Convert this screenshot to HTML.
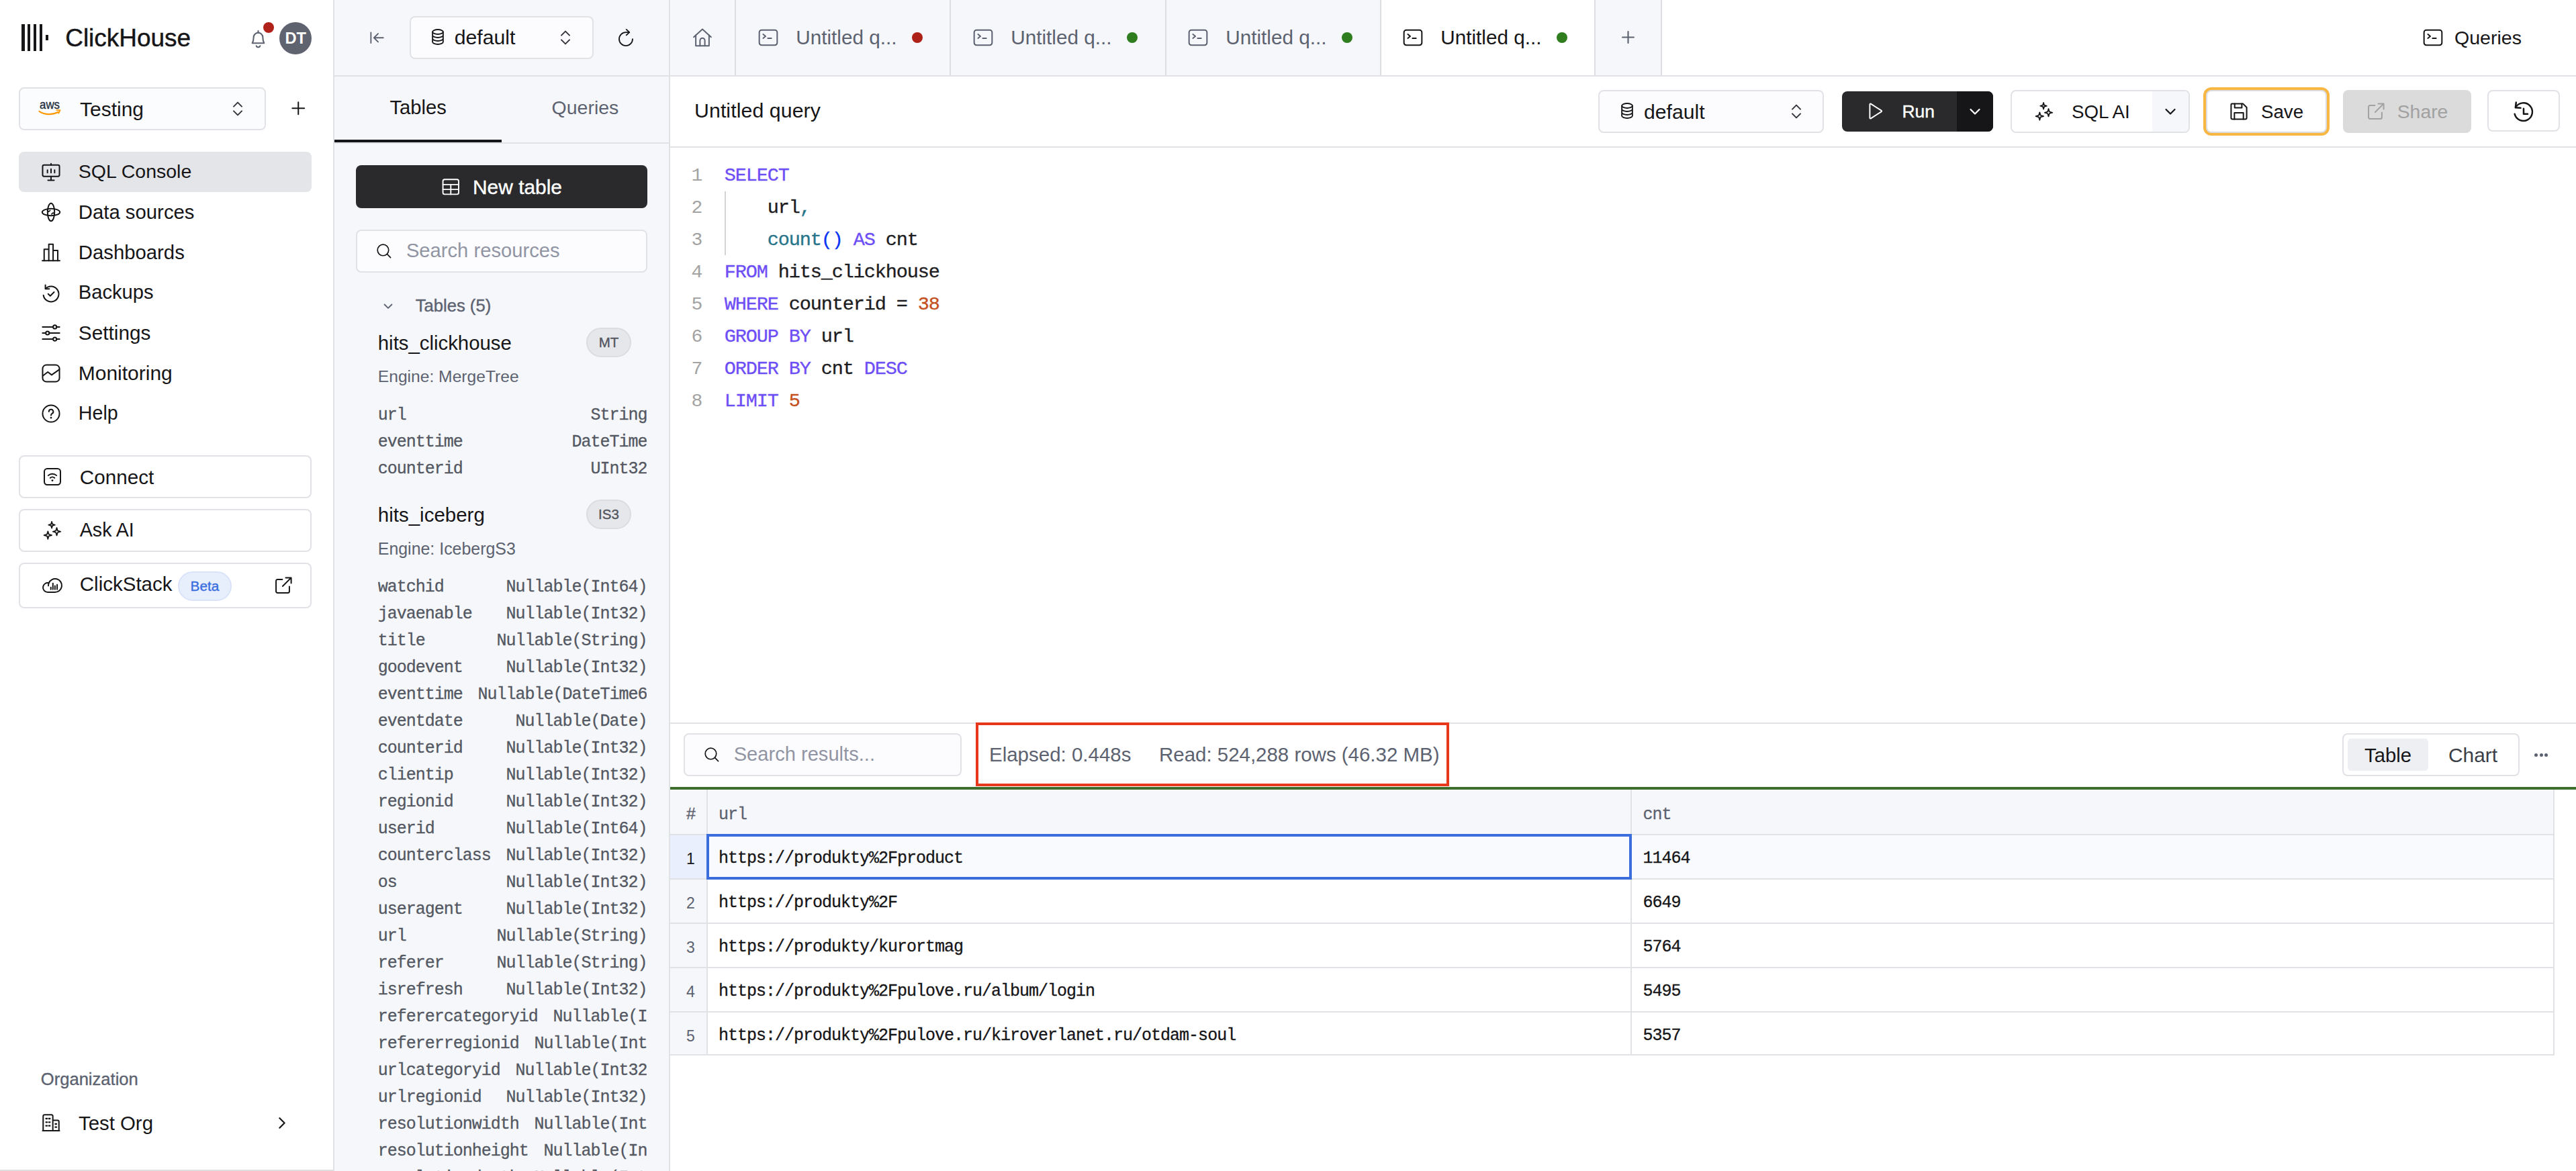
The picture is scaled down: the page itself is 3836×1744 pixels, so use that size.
<!DOCTYPE html>
<html lang="en"><head><meta charset="utf-8"><title>ClickHouse Cloud - SQL Console</title>
<style>
html,body{margin:0;padding:0;background:#fff}
body{width:3836px;height:1744px;position:relative;overflow:hidden;font-family:'Liberation Sans', sans-serif;}
.a{position:absolute;display:block}
.t{white-space:pre}
.row{-webkit-text-stroke:0.3px;left:562.800px;width:400.700px;height:40px;line-height:40px;display:flex;justify-content:space-between;gap:22px;overflow:hidden;white-space:pre;font-family:'Liberation Mono', monospace;font-size:25px;letter-spacing:-1.0px;color:#535862}
.row span{flex:none}
.cell{font-family:'Liberation Mono', monospace;font-size:25px;letter-spacing:-1.0px;line-height:40px;white-space:pre;color:#161517;-webkit-text-stroke:0.3px}
.ln{font-family:'Liberation Mono', monospace;font-size:28px;line-height:48px;width:32px;text-align:center;color:#a3a3a3}
.code{font-family:'Liberation Mono', monospace;font-size:28.500px;letter-spacing:-1.100px;line-height:48px;white-space:pre;color:#1d1d1f;-webkit-text-stroke:0.35px}
.ck{color:#6e4ff5}.cf{color:#287489}.cb{color:#0a34f5}.cn{color:#c5501f}.cp{color:#1d1d1f}
</style></head>
<body>
<div class="a" style="left:0px;top:0px;width:496px;height:1744px;background:#fff;"></div>
<div class="a" style="left:496px;top:0px;width:2px;height:1744px;background:#e1e2e6;"></div>
<div class="a" style="left:0px;top:1742px;width:496px;height:2px;background:#dedede;"></div>
<div class="a" style="left:498px;top:0px;width:498px;height:1744px;background:#f6f7fa;"></div>
<div class="a" style="left:996px;top:0px;width:2px;height:1744px;background:#e1e2e6;"></div>
<div class="a" style="left:32px;top:36px;width:4.5px;height:39.7px;background:#161517;"></div>
<div class="a" style="left:40.9px;top:36px;width:4.5px;height:39.7px;background:#161517;"></div>
<div class="a" style="left:49.8px;top:36px;width:4.5px;height:39.7px;background:#161517;"></div>
<div class="a" style="left:58.75px;top:36px;width:4.5px;height:39.7px;background:#161517;"></div>
<div class="a" style="left:67.9px;top:51.8px;width:4.3px;height:8.4px;background:#161517;"></div>
<span class="a t" id="t1" style="top:31.8px;line-height:50px;font-size:36.98px;color:#161517;-webkit-text-stroke:0.45px #161517;left:97.2px;letter-spacing:0.003px;">ClickHouse</span>
<svg class="a" style="left:368.9px;top:41.5px;color:#5c6270;" width="31" height="31" viewBox="0 0 24 24" fill="none" stroke="currentColor" stroke-width="1.6" stroke-linecap="round" stroke-linejoin="round"><path d="M5.2 17.2c.9-1.5 1.5-3.5 1.5-6.7a5.3 5.3 0 0 1 10.6 0c0 3.200.6 5.200 1.500 6.700H5.2z"/><path d="M9.8 20.300a2.3 2.300 0 0 0 4.400 0"/><path d="M12 3.200v2"/></svg>
<div class="a" style="left:391.8px;top:32.9px;width:16px;height:16px;border-radius:50%;background:#b0221a"></div>
<div class="a" style="left:416px;top:33px;width:48px;height:48px;border-radius:50%;background:#5f6370"></div>
<span class="a t" id="t2" style="top:41.2px;line-height:32px;font-size:23.62px;color:#fff;font-weight:700;left:424.5px;letter-spacing:0.008px;">DT</span>
<div class="a" style="left:28px;top:130px;width:368px;height:64px;background:#fbfcfe;border:2px solid #e1e2e6;border-radius:8px;box-sizing:border-box;"></div>
<svg class="a" style="left:56px;top:148px" width="38" height="28" viewBox="0 0 38 28"><text x="3" y="13.500" font-family="Liberation Sans, sans-serif" font-size="18.500" font-weight="400" fill="#252f3e" stroke="#252f3e" stroke-width="0.35" textLength="30" lengthAdjust="spacingAndGlyphs">aws</text><path d="M2.500 17.800c8.500 5.600 20 5.600 28.500 1" fill="none" stroke="#f90" stroke-width="2.200" stroke-linecap="round"/><path d="M28.300 15.800l5.200.3-2.100 4.600" fill="none" stroke="#f90" stroke-width="1.800" stroke-linecap="round" stroke-linejoin="round"/></svg>
<span class="a t" id="t3" style="top:141.5px;line-height:41px;font-size:29.98px;color:#161517;left:119px;letter-spacing:0.004px;">Testing</span>
<svg class="a" style="left:337.9px;top:146.0px;color:#33353b;" width="32" height="32" viewBox="0 0 24 24" fill="none" stroke="currentColor" stroke-width="1.5" stroke-linecap="round" stroke-linejoin="round"><path d="M7.500 9.500L12 5l4.500 4.500M7.500 14.500L12 19l4.500-4.500"/></svg>
<svg class="a" style="left:429.8px;top:147.4px;color:#161517;" width="28.5" height="28.5" viewBox="0 0 24 24" fill="none" stroke="currentColor" stroke-width="1.7" stroke-linecap="round" stroke-linejoin="round"><path d="M12 4.500v15M4.500 12h15"/></svg>
<div class="a" style="left:28px;top:226px;width:436px;height:60px;background:#e4e5e8;border-radius:8px;"></div>
<svg class="a" style="left:60.0px;top:239.7px;color:#161517;" width="32" height="32" viewBox="0 0 24 24" fill="none" stroke="currentColor" stroke-width="1.5" stroke-linecap="round" stroke-linejoin="round"><path d="M12 2.800v1.600"/><rect x="2.600" y="4.400" width="18.800" height="12.600" rx="1.600"/><path d="M8 10v3M12 8.800v4.200M16 10v3M12 17v4.300M8.600 21.300h6.800"/></svg>
<span class="a t" id="t4" style="top:235.2px;line-height:41px;font-size:28.51px;color:#161517;left:116.8px;letter-spacing:0.004px;">SQL Console</span>
<svg class="a" style="left:60.0px;top:299.7px;color:#161517;" width="32" height="32" viewBox="0 0 24 24" fill="none" stroke="currentColor" stroke-width="1.5" stroke-linecap="round" stroke-linejoin="round"><ellipse cx="12" cy="12" rx="9.900" ry="3.900"/><ellipse cx="12" cy="12" rx="3.900" ry="9.900"/><path d="M7.800 9.800l1.500 1.700 1.700-1.500M15.900 14.300l-1.600-1.700-1.700 1.600" stroke-width="1.200"/></svg>
<span class="a t" id="t5" style="top:295.2px;line-height:41px;font-size:29.31px;color:#161517;left:116.8px;letter-spacing:0.008px;">Data sources</span>
<svg class="a" style="left:60.0px;top:359.7px;color:#161517;" width="32" height="32" viewBox="0 0 24 24" fill="none" stroke="currentColor" stroke-width="1.5" stroke-linecap="round" stroke-linejoin="round"><path d="M2.300 21.200h19.400"/><path d="M4.300 21.200V8.400h5.200M9.500 21.200V2.900h4.800v18.300M14.300 9.800h5.200v11.400"/></svg>
<span class="a t" id="t6" style="top:355.2px;line-height:41px;font-size:29.3px;color:#161517;left:116.8px;letter-spacing:0.002px;">Dashboards</span>
<svg class="a" style="left:60.0px;top:419.7px;color:#161517;" width="32" height="32" viewBox="0 0 24 24" fill="none" stroke="currentColor" stroke-width="1.5" stroke-linecap="round" stroke-linejoin="round"><path d="M5.700 3.300v4.300h4.300"/><path d="M5.800 7.500a8.600 8.600 0 1 1-2.300 7.300"/><path d="M8.800 13.300l2.300 2.300 4.300-4.300"/></svg>
<span class="a t" id="t7" style="top:415.2px;line-height:41px;font-size:29.15px;color:#161517;left:116.8px;letter-spacing:0.003px;">Backups</span>
<svg class="a" style="left:60.0px;top:479.7px;color:#161517;" width="32" height="32" viewBox="0 0 24 24" fill="none" stroke="currentColor" stroke-width="1.5" stroke-linecap="round" stroke-linejoin="round"><path d="M2.500 5.200h11.800M18.200 5.200h3.300M2.500 12h3.600M10 12h11.500M2.500 18.800h11.800M18.200 18.800h3.300"/><circle cx="16.250" cy="5.200" r="1.950"/><circle cx="8.050" cy="12" r="1.950"/><circle cx="16.250" cy="18.800" r="1.950"/></svg>
<span class="a t" id="t8" style="top:475.2px;line-height:41px;font-size:29.78px;color:#161517;left:116.8px;letter-spacing:0.005px;">Settings</span>
<svg class="a" style="left:60.0px;top:539.7px;color:#161517;" width="32" height="32" viewBox="0 0 24 24" fill="none" stroke="currentColor" stroke-width="1.5" stroke-linecap="round" stroke-linejoin="round"><rect x="2.600" y="2.600" width="18.800" height="18.800" rx="4.200"/><path d="M2.800 14.800l5.600-4.300 4.300 3.300 8.500-6"/></svg>
<span class="a t" id="t9" style="top:535.2px;line-height:41px;font-size:29.98px;color:#161517;left:116.8px;letter-spacing:0.006px;">Monitoring</span>
<svg class="a" style="left:60.0px;top:599.7px;color:#161517;" width="32" height="32" viewBox="0 0 24 24" fill="none" stroke="currentColor" stroke-width="1.5" stroke-linecap="round" stroke-linejoin="round"><circle cx="12" cy="12" r="9.400"/><path d="M9.600 9.700a2.450 2.450 0 1 1 3.600 2.200c-.8.450-1.200.9-1.200 1.900"/><circle cx="12" cy="16.600" r="1" fill="currentColor" stroke="none"/></svg>
<span class="a t" id="t10" style="top:595.2px;line-height:41px;font-size:28.63px;color:#161517;left:116.8px;letter-spacing:0.006px;">Help</span>
<div class="a" style="left:28px;top:678px;width:436px;height:64px;background:#fff;border:2px solid #e1e2e6;border-radius:8px;box-sizing:border-box;"></div>
<div class="a" style="left:28px;top:758px;width:436px;height:64px;background:#fff;border:2px solid #e1e2e6;border-radius:8px;box-sizing:border-box;"></div>
<div class="a" style="left:28px;top:838px;width:436px;height:68px;background:#fff;border:2px solid #e1e2e6;border-radius:8px;box-sizing:border-box;"></div>
<svg class="a" style="left:62.0px;top:694.0px;color:#161517;" width="32" height="32" viewBox="0 0 24 24" fill="none" stroke="currentColor" stroke-width="1.5" stroke-linecap="round" stroke-linejoin="round"><rect x="3" y="3" width="18" height="18" rx="3.300"/><path d="M7.400 10.600a6.600 6.600 0 0 1 9.200 0M9.600 13.300a3.500 3.500 0 0 1 4.800 0"/><circle cx="12" cy="16.200" r="1.100" fill="currentColor" stroke="none"/></svg>
<span class="a t" id="t11" style="top:689.5px;line-height:41px;font-size:29.64px;color:#161517;left:118.8px;letter-spacing:0.008px;">Connect</span>
<svg class="a" style="left:61.6px;top:773.7px;color:#161517;" width="32" height="32" viewBox="0 0 24 24" fill="none" stroke="currentColor" stroke-width="1.5" stroke-linecap="round" stroke-linejoin="round"><path d="M11.30 2.20 L12.11 4.99 L14.90 5.80 L12.11 6.61 L11.30 9.40 L10.49 6.61 L7.70 5.80 L10.49 4.99Z" stroke-width="1.300"/><path d="M16.90 9.00 L17.87 12.33 L21.20 13.30 L17.87 14.27 L16.90 17.60 L15.93 14.27 L12.60 13.30 L15.93 12.33Z" stroke-width="1.300"/><path d="M7.00 13.00 L7.97 16.33 L11.30 17.30 L7.97 18.27 L7.00 21.60 L6.03 18.27 L2.70 17.30 L6.03 16.33Z" stroke-width="1.300"/></svg>
<span class="a t" id="t12" style="top:768.9px;line-height:41px;font-size:28.58px;color:#161517;left:118.8px;letter-spacing:-0.003px;">Ask AI</span>
<svg class="a" style="left:62.0px;top:856.0px;color:#161517;" width="32" height="32" viewBox="0 0 24 24" fill="none" stroke="currentColor" stroke-width="1.5" stroke-linecap="round" stroke-linejoin="round"><path d="M6.750 19.500H15A7.500 7.500 0 1 0 8.060 9.160A5.250 5.250 0 1 0 6.750 19.500z"/><path d="M8.060 9.160A7.500 7.500 0 0 0 7.550 12.300"/><path d="M10.300 16.400v-2.400M12.600 16.400v-6.800M14.900 16.400v-4M17.300 16.400v-5.300" stroke-width="1.500"/></svg>
<span class="a t" id="t13" style="top:849.2px;line-height:41px;font-size:29.5px;color:#161517;left:118.8px;letter-spacing:-0.000px;">ClickStack</span>
<div class="a" style="left:265px;top:851px;width:80px;height:43.5px;background:#e7eefc;border:2px solid #d9e3fa;border-radius:22px;box-sizing:border-box;"></div>
<span class="a t" id="t14" style="top:857.6px;line-height:30px;font-size:20.75px;color:#3a6fdf;-webkit-text-stroke:0.4px #3a6fdf;left:283.6px;letter-spacing:0.003px;">Beta</span>
<svg class="a" style="left:406.0px;top:855.5px;color:#161517;" width="32" height="32" viewBox="0 0 24 24" fill="none" stroke="currentColor" stroke-width="1.5" stroke-linecap="round" stroke-linejoin="round"><path d="M10.800 5.300H5.400a1.600 1.600 0 0 0-1.600 1.600v11.700a1.600 1.600 0 0 0 1.600 1.600h11.700a1.600 1.600 0 0 0 1.600-1.600v-5.400"/><path d="M14.600 3.300h6.100v6.100M20.500 3.500l-9.300 9.300"/></svg>
<span class="a t" id="t15" style="top:1590.0px;line-height:35px;font-size:25.57px;color:#5c6270;-webkit-text-stroke:0.35px #5c6270;left:60.8px;letter-spacing:0.005px;">Organization</span>
<svg class="a" style="left:60.0px;top:1656.0px;color:#161517;" width="32" height="32" viewBox="0 0 24 24" fill="none" stroke="currentColor" stroke-width="1.5" stroke-linecap="round" stroke-linejoin="round"><path d="M3.200 21V4.600a1.500 1.500 0 0 1 1.500-1.500h7.800a1.500 1.500 0 0 1 1.500 1.500V21M14 9.300h5.300a1.500 1.500 0 0 1 1.500 1.500V21M2.600 21h18.800"/><path d="M6.400 7.500h1.200M9.600 7.500h1.200M6.400 11.500h1.200M9.600 11.500h1.200M6.400 15.500h1.200M9.600 15.500h1.200M16.800 13.500h1.200M16.800 17h1.200" stroke-width="1.700"/></svg>
<span class="a t" id="t16" style="top:1651.5px;line-height:41px;font-size:29.37px;color:#161517;left:117px;letter-spacing:0.006px;">Test Org</span>
<svg class="a" style="left:407.4px;top:1660.0px;color:#161517;" width="25" height="25" viewBox="0 0 24 24" fill="none" stroke="currentColor" stroke-width="2.1" stroke-linecap="round" stroke-linejoin="round"><path d="M9 5l7 7-7 7"/></svg>
<div class="a" style="left:498px;top:111.6px;width:498px;height:2px;background:#e1e2e6;"></div>
<svg class="a" style="left:547.0px;top:41.9px;color:#5c6270;" width="28.5" height="28.5" viewBox="0 0 24 24" fill="none" stroke="currentColor" stroke-width="1.6" stroke-linecap="round" stroke-linejoin="round"><path d="M4.500 5.500v13M20 12H8.500M13.500 6.800L8.300 12l5.200 5.200"/></svg>
<div class="a" style="left:610px;top:24px;width:274px;height:64px;background:#fcfcfe;border:2px solid #e1e2e6;border-radius:8px;box-sizing:border-box;"></div>
<svg class="a" style="left:636.9px;top:39.8px;color:#161517;" width="30" height="30" viewBox="0 0 24 24" fill="none" stroke="currentColor" stroke-width="1.5" stroke-linecap="round" stroke-linejoin="round"><ellipse cx="12" cy="6" rx="6.300" ry="2.800"/><path d="M5.700 6v12c0 1.550 2.800 2.800 6.300 2.800s6.300-1.250 6.300-2.800V6M5.700 10c0 1.550 2.800 2.800 6.300 2.800s6.300-1.250 6.300-2.800M5.700 14c0 1.550 2.800 2.800 6.300 2.800s6.300-1.250 6.300-2.800"/></svg>
<span class="a t" id="t17" style="top:35.2px;line-height:41px;font-size:30.24px;color:#161517;left:676.7px;letter-spacing:0.003px;">default</span>
<svg class="a" style="left:826.0px;top:40.0px;color:#33353b;" width="32" height="32" viewBox="0 0 24 24" fill="none" stroke="currentColor" stroke-width="1.5" stroke-linecap="round" stroke-linejoin="round"><path d="M7.500 9.500L12 5l4.500 4.500M7.500 14.500L12 19l4.500-4.500"/></svg>
<svg class="a" style="left:916.6px;top:40.6px;color:#161517;" width="30" height="30" viewBox="0 0 24 24" fill="none" stroke="currentColor" stroke-width="1.5" stroke-linecap="round" stroke-linejoin="round"><path d="M12.600 2.300l3.600 3.400-3.600 3.400"/><path d="M16 5.700h-4a8 8 0 1 0 8 8"/></svg>
<span class="a t" id="t18" style="top:140.3px;line-height:41px;font-size:29.27px;color:#161517;left:580.4px;letter-spacing:-0.002px;">Tables</span>
<span class="a t" id="t19" style="top:140.3px;line-height:41px;font-size:28.47px;color:#5c6270;left:821.6px;letter-spacing:0.002px;">Queries</span>
<div class="a" style="left:498px;top:211.6px;width:498px;height:2px;background:#e1e2e6;"></div>
<div class="a" style="left:498px;top:208px;width:249px;height:4px;background:#161517;"></div>
<div class="a" style="left:530px;top:246px;width:434px;height:64px;background:#2a2a2c;border-radius:8px;"></div>
<svg class="a" style="left:656.0px;top:263.1px;color:#fff;" width="30.6" height="30.6" viewBox="0 0 24 24" fill="none" stroke="currentColor" stroke-width="1.5" stroke-linecap="round" stroke-linejoin="round"><rect x="2.800" y="3.300" width="18.400" height="17.400" rx="2"/><path d="M2.800 9.300h18.400M2.800 15h18.400M12 9.300v11.400"/></svg>
<span class="a t" id="t20" style="top:257.9px;line-height:41px;font-size:29.91px;color:#fff;-webkit-text-stroke:0.4px #fff;left:704px;letter-spacing:0.000px;">New table</span>
<div class="a" style="left:530px;top:342px;width:434px;height:64px;background:#fcfcfe;border:2px solid #e1e2e6;border-radius:8px;box-sizing:border-box;"></div>
<svg class="a" style="left:558.3px;top:360.2px;color:#161517;" width="27.2" height="27.2" viewBox="0 0 24 24" fill="none" stroke="currentColor" stroke-width="1.5" stroke-linecap="round" stroke-linejoin="round"><circle cx="11" cy="11" r="7.300"/><path d="M16.300 16.300l4.500 4.500"/></svg>
<span class="a t" id="t21" style="top:353.3px;line-height:41px;font-size:29.18px;color:#9195a3;left:604.9px;letter-spacing:0.005px;">Search resources</span>
<svg class="a" style="left:568.0px;top:445.9px;color:#5c6270;" width="20" height="20" viewBox="0 0 24 24" fill="none" stroke="currentColor" stroke-width="2.2" stroke-linecap="round" stroke-linejoin="round"><path d="M5.500 9l6.500 6.500L18.500 9"/></svg>
<span class="a t" id="t22" style="top:437.5px;line-height:35px;font-size:25.62px;color:#5c6270;-webkit-text-stroke:0.4px #5c6270;left:618.7px;letter-spacing:0.005px;">Tables (5)</span>
<span class="a t" id="t23" style="top:489.7px;line-height:41px;font-size:29.35px;color:#161517;left:562.8px;letter-spacing:0.000px;">hits_clickhouse</span>
<div class="a" style="left:873.4px;top:488px;width:66.2px;height:44px;background:#e6e7ea;border:2px solid #dbdce0;border-radius:22px;box-sizing:border-box;"></div>
<span class="a t" id="t24" style="top:495.2px;line-height:29px;font-size:20.5px;color:#53575f;-webkit-text-stroke:0.4px #53575f;left:906.5px;transform:translateX(-50%);">MT</span>
<span class="a t" id="t25" style="top:543.5px;line-height:34px;font-size:24.62px;color:#5c6270;left:562.8px;letter-spacing:0.003px;">Engine: MergeTree</span>
<div class="a row" style="top:599.0px"><span>url</span><span>String</span></div>
<div class="a row" style="top:639.0px"><span>eventtime</span><span>DateTime</span></div>
<div class="a row" style="top:679.0px"><span>counterid</span><span>UInt32</span></div>
<span class="a t" id="t26" style="top:745.7px;line-height:41px;font-size:29.49px;color:#161517;left:562.8px;letter-spacing:0.001px;">hits_iceberg</span>
<div class="a" style="left:873.4px;top:744px;width:66.2px;height:44px;background:#e6e7ea;border:2px solid #dbdce0;border-radius:22px;box-sizing:border-box;"></div>
<span class="a t" id="t27" style="top:751.2px;line-height:29px;font-size:20.5px;color:#53575f;-webkit-text-stroke:0.4px #53575f;left:906.5px;transform:translateX(-50%);">IS3</span>
<span class="a t" id="t28" style="top:799.5px;line-height:34px;font-size:24.91px;color:#5c6270;left:562.8px;letter-spacing:0.004px;">Engine: IcebergS3</span>
<div class="a row" style="top:855.0px"><span>watchid</span><span>Nullable(Int64)</span></div>
<div class="a row" style="top:895.0px"><span>javaenable</span><span>Nullable(Int32)</span></div>
<div class="a row" style="top:935.0px"><span>title</span><span>Nullable(String)</span></div>
<div class="a row" style="top:975.0px"><span>goodevent</span><span>Nullable(Int32)</span></div>
<div class="a row" style="top:1015.0px"><span>eventtime</span><span>Nullable(DateTime6</span></div>
<div class="a row" style="top:1055.0px"><span>eventdate</span><span>Nullable(Date)</span></div>
<div class="a row" style="top:1095.0px"><span>counterid</span><span>Nullable(Int32)</span></div>
<div class="a row" style="top:1135.0px"><span>clientip</span><span>Nullable(Int32)</span></div>
<div class="a row" style="top:1175.0px"><span>regionid</span><span>Nullable(Int32)</span></div>
<div class="a row" style="top:1215.0px"><span>userid</span><span>Nullable(Int64)</span></div>
<div class="a row" style="top:1255.0px"><span>counterclass</span><span>Nullable(Int32)</span></div>
<div class="a row" style="top:1295.0px"><span>os</span><span>Nullable(Int32)</span></div>
<div class="a row" style="top:1335.0px"><span>useragent</span><span>Nullable(Int32)</span></div>
<div class="a row" style="top:1375.0px"><span>url</span><span>Nullable(String)</span></div>
<div class="a row" style="top:1415.0px"><span>referer</span><span>Nullable(String)</span></div>
<div class="a row" style="top:1455.0px"><span>isrefresh</span><span>Nullable(Int32)</span></div>
<div class="a row" style="top:1495.0px"><span>referercategoryid</span><span>Nullable(I</span></div>
<div class="a row" style="top:1535.0px"><span>refererregionid</span><span>Nullable(Int</span></div>
<div class="a row" style="top:1575.0px"><span>urlcategoryid</span><span>Nullable(Int32</span></div>
<div class="a row" style="top:1615.0px"><span>urlregionid</span><span>Nullable(Int32)</span></div>
<div class="a row" style="top:1655.0px"><span>resolutionwidth</span><span>Nullable(Int</span></div>
<div class="a row" style="top:1695.0px"><span>resolutionheight</span><span>Nullable(In</span></div>
<div class="a row" style="top:1735.0px"><span>resolutiondepth</span><span>Nullable(Int</span></div>
<div class="a" style="left:998px;top:0px;width:1475px;height:112px;background:#f6f7fa;"></div>
<div class="a" style="left:2056px;top:0px;width:318px;height:112px;background:#fff;"></div>
<div class="a" style="left:998px;top:112px;width:2838px;height:2px;background:#e1e2e6;"></div>
<div class="a" style="left:1094px;top:0px;width:2px;height:112px;background:#dddee2;"></div>
<div class="a" style="left:1414px;top:0px;width:2px;height:112px;background:#dddee2;"></div>
<div class="a" style="left:1734.5px;top:0px;width:2px;height:112px;background:#dddee2;"></div>
<div class="a" style="left:2054.5px;top:0px;width:2px;height:112px;background:#dddee2;"></div>
<div class="a" style="left:2374px;top:0px;width:2px;height:112px;background:#dddee2;"></div>
<div class="a" style="left:2472.5px;top:0px;width:2px;height:112px;background:#dddee2;"></div>
<svg class="a" style="left:1029.9px;top:40.0px;color:#5c6270;" width="32" height="32" viewBox="0 0 24 24" fill="none" stroke="currentColor" stroke-width="1.5" stroke-linecap="round" stroke-linejoin="round"><path d="M2.300 11.400L12 2.700l9.700 8.700"/><path d="M4.600 9.400V21.200h14.800V9.400"/><path d="M9.300 21.200v-6a2.700 2.700 0 0 1 5.400 0v6"/></svg>
<svg class="a" style="left:1128.0px;top:39.8px;color:#5c6270;" width="32" height="32" viewBox="0 0 24 24" fill="none" stroke="currentColor" stroke-width="1.5" stroke-linecap="round" stroke-linejoin="round"><rect x="2" y="3.600" width="20" height="16.800" rx="2.600"/><path d="M6.300 8.300l2.700 2.200-2.700 2.200M11.500 12.700h4"/></svg>
<span class="a t" id="t29" style="top:35.1px;line-height:41px;font-size:29.73px;color:#5c6270;left:1185.2px;letter-spacing:0.006px;">Untitled q...</span>
<div class="a" style="left:1358px;top:47.900px;width:16px;height:16px;border-radius:50%;background:#ad2118"></div>
<svg class="a" style="left:1448.0px;top:39.8px;color:#5c6270;" width="32" height="32" viewBox="0 0 24 24" fill="none" stroke="currentColor" stroke-width="1.5" stroke-linecap="round" stroke-linejoin="round"><rect x="2" y="3.600" width="20" height="16.800" rx="2.600"/><path d="M6.300 8.300l2.700 2.200-2.700 2.200M11.500 12.700h4"/></svg>
<span class="a t" id="t30" style="top:35.1px;line-height:41px;font-size:29.73px;color:#5c6270;left:1505.2px;letter-spacing:0.006px;">Untitled q...</span>
<div class="a" style="left:1678px;top:47.900px;width:16px;height:16px;border-radius:50%;background:#2f7d1f"></div>
<svg class="a" style="left:1768.0px;top:39.8px;color:#5c6270;" width="32" height="32" viewBox="0 0 24 24" fill="none" stroke="currentColor" stroke-width="1.5" stroke-linecap="round" stroke-linejoin="round"><rect x="2" y="3.600" width="20" height="16.800" rx="2.600"/><path d="M6.300 8.300l2.700 2.200-2.700 2.200M11.500 12.700h4"/></svg>
<span class="a t" id="t31" style="top:35.1px;line-height:41px;font-size:29.73px;color:#5c6270;left:1825.2px;letter-spacing:0.006px;">Untitled q...</span>
<div class="a" style="left:1998px;top:47.900px;width:16px;height:16px;border-radius:50%;background:#2f7d1f"></div>
<svg class="a" style="left:2088.0px;top:39.8px;color:#161517;" width="32" height="32" viewBox="0 0 24 24" fill="none" stroke="currentColor" stroke-width="1.5" stroke-linecap="round" stroke-linejoin="round"><rect x="2" y="3.600" width="20" height="16.800" rx="2.600"/><path d="M6.300 8.300l2.700 2.200-2.700 2.200M11.500 12.700h4"/></svg>
<span class="a t" id="t32" style="top:35.1px;line-height:41px;font-size:29.73px;color:#161517;left:2145.2px;letter-spacing:0.006px;">Untitled q...</span>
<div class="a" style="left:2318px;top:47.900px;width:16px;height:16px;border-radius:50%;background:#2f7d1f"></div>
<svg class="a" style="left:2410.5px;top:41.7px;color:#5c6270;" width="27" height="27" viewBox="0 0 24 24" fill="none" stroke="currentColor" stroke-width="1.9" stroke-linecap="round" stroke-linejoin="round"><path d="M12 4.500v15M4.500 12h15"/></svg>
<svg class="a" style="left:3606.5px;top:40.0px;color:#161517;" width="32" height="32" viewBox="0 0 24 24" fill="none" stroke="currentColor" stroke-width="1.5" stroke-linecap="round" stroke-linejoin="round"><rect x="2" y="3.600" width="20" height="16.800" rx="2.600"/><path d="M6.300 8.300l2.700 2.200-2.700 2.200M11.500 12.700h4"/></svg>
<span class="a t" id="t33" style="top:35.5px;line-height:41px;font-size:28.56px;color:#161517;left:3655px;letter-spacing:0.004px;">Queries</span>
<div class="a" style="left:998px;top:218px;width:2838px;height:2px;background:#e1e2e6;"></div>
<span class="a t" id="t34" style="top:143.5px;line-height:41px;font-size:30.3px;color:#161517;left:1034px;letter-spacing:0.076px;">Untitled query</span>
<div class="a" style="left:2380px;top:134px;width:336px;height:64px;background:#fcfcfe;border:2px solid #e1e2e6;border-radius:8px;box-sizing:border-box;"></div>
<svg class="a" style="left:2408.0px;top:150.3px;color:#161517;" width="30" height="30" viewBox="0 0 24 24" fill="none" stroke="currentColor" stroke-width="1.5" stroke-linecap="round" stroke-linejoin="round"><ellipse cx="12" cy="6" rx="6.300" ry="2.800"/><path d="M5.700 6v12c0 1.550 2.800 2.800 6.300 2.800s6.300-1.250 6.300-2.800V6M5.700 10c0 1.550 2.800 2.800 6.300 2.800s6.300-1.250 6.300-2.800M5.700 14c0 1.550 2.800 2.800 6.300 2.800s6.300-1.250 6.300-2.800"/></svg>
<span class="a t" id="t35" style="top:145.5px;line-height:41px;font-size:30.17px;color:#161517;left:2448px;letter-spacing:0.008px;">default</span>
<svg class="a" style="left:2659.0px;top:150.0px;color:#33353b;" width="32" height="32" viewBox="0 0 24 24" fill="none" stroke="currentColor" stroke-width="1.5" stroke-linecap="round" stroke-linejoin="round"><path d="M7.500 9.500L12 5l4.500 4.500M7.500 14.500L12 19l4.500-4.500"/></svg>
<div class="a" style="left:2743px;top:136px;width:225px;height:60px;background:#2a2a2c;border-radius:8px;"></div>
<div class="a" style="left:2914px;top:136px;width:54px;height:60px;background:#161517;border-radius:0 8px 8px 0;"></div>
<svg class="a" style="left:2775.5px;top:150.3px;color:#fff;" width="31" height="31" viewBox="0 0 24 24" fill="none" stroke="currentColor" stroke-width="1.5" stroke-linecap="round" stroke-linejoin="round"><path d="M6.500 4.300v15.400a.8.800 0 0 0 1.200.7l12.100-7.700a.8.800 0 0 0 0-1.400L7.700 3.600a.8.800 0 0 0-1.200.7z"/></svg>
<span class="a t" id="t36" style="top:146.8px;line-height:38px;font-size:26.44px;color:#fff;-webkit-text-stroke:0.4px #fff;left:2832.5px;letter-spacing:0.000px;">Run</span>
<svg class="a" style="left:2928.8px;top:154.3px;color:#fff;" width="24" height="24" viewBox="0 0 24 24" fill="none" stroke="currentColor" stroke-width="2.2" stroke-linecap="round" stroke-linejoin="round"><path d="M5.500 9l6.500 6.500L18.500 9"/></svg>
<div class="a" style="left:2994px;top:134px;width:266.5px;height:64px;background:#fff;border:2px solid #e1e2e6;border-radius:8px;box-sizing:border-box;"></div>
<div class="a" style="left:3205px;top:136px;width:53.5px;height:60px;background:#f6f7fa;border-radius:0 6px 6px 0;"></div>
<svg class="a" style="left:3027.5px;top:150.0px;color:#161517;" width="32" height="32" viewBox="0 0 24 24" fill="none" stroke="currentColor" stroke-width="1.5" stroke-linecap="round" stroke-linejoin="round"><path d="M11.30 2.20 L12.11 4.99 L14.90 5.80 L12.11 6.61 L11.30 9.40 L10.49 6.61 L7.70 5.80 L10.49 4.99Z" stroke-width="1.300"/><path d="M16.90 9.00 L17.87 12.33 L21.20 13.30 L17.87 14.27 L16.90 17.60 L15.93 14.27 L12.60 13.30 L15.93 12.33Z" stroke-width="1.300"/><path d="M7.00 13.00 L7.97 16.33 L11.30 17.30 L7.97 18.27 L7.00 21.60 L6.03 18.27 L2.70 17.30 L6.03 16.33Z" stroke-width="1.300"/></svg>
<span class="a t" id="t37" style="top:145.5px;line-height:41px;font-size:27.72px;color:#161517;left:3085px;letter-spacing:-0.002px;">SQL AI</span>
<svg class="a" style="left:3220.0px;top:154.3px;color:#161517;" width="24" height="24" viewBox="0 0 24 24" fill="none" stroke="currentColor" stroke-width="2.2" stroke-linecap="round" stroke-linejoin="round"><path d="M5.500 9l6.500 6.500L18.500 9"/></svg>
<div class="a" style="left:3285px;top:134px;width:180px;height:64px;background:#fff;border:2px solid #dcdde2;border-radius:8px;box-sizing:border-box;box-shadow:0 0 0 4px #f7b742;"></div>
<svg class="a" style="left:3318.3px;top:150.0px;color:#161517;" width="32" height="32" viewBox="0 0 24 24" fill="none" stroke="currentColor" stroke-width="1.5" stroke-linecap="round" stroke-linejoin="round"><path d="M4.300 3.300h12.200l4.200 4.200v11.700a1.500 1.500 0 0 1-1.500 1.500H4.800a1.500 1.500 0 0 1-1.500-1.500V4.300a1 1 0 0 1 1-1z"/><path d="M7.300 3.300v4.500h8V3.300M7 20.700v-7.200h10v7.200"/></svg>
<span class="a t" id="t38" style="top:145.5px;line-height:41px;font-size:27.7px;color:#161517;left:3367px;letter-spacing:-0.027px;">Save</span>
<div class="a" style="left:3489px;top:134px;width:190.5px;height:64px;background:#dbdbdb;border-radius:8px;"></div>
<svg class="a" style="left:3522.2px;top:149.5px;color:#a1a1a1;" width="32" height="32" viewBox="0 0 24 24" fill="none" stroke="currentColor" stroke-width="1.5" stroke-linecap="round" stroke-linejoin="round"><path d="M10.800 5.300H5.400a1.600 1.600 0 0 0-1.600 1.600v11.700a1.600 1.600 0 0 0 1.600 1.600h11.700a1.600 1.600 0 0 0 1.600-1.600v-5.400"/><path d="M14.600 3.300h6.100v6.100M20.500 3.500l-9.300 9.300"/></svg>
<span class="a t" id="t39" style="top:145.5px;line-height:41px;font-size:28.37px;color:#a1a1a1;left:3569.7px;letter-spacing:0.003px;">Share</span>
<div class="a" style="left:3704px;top:134px;width:107.5px;height:62px;background:#fff;border:2px solid #e1e2e6;border-radius:8px;box-sizing:border-box;"></div>
<svg class="a" style="left:3738.0px;top:148.3px;color:#161517;" width="40" height="40" viewBox="0 0 24 24" fill="none" stroke="currentColor" stroke-width="1.5" stroke-linecap="round" stroke-linejoin="round"><path d="M5.300 2.700L4.700 7.300l4.600.4"/><path d="M4.900 7.100A8 8 0 1 1 4 13"/><path d="M12 8.300V13h3.600"/></svg>
<span class="a ln" style="left:1022px;top:237.8px">1</span>
<span class="a code" style="left:1078.700px;top:238.3px"><span class="ck">SELECT</span></span>
<span class="a ln" style="left:1022px;top:285.8px">2</span>
<span class="a code" style="left:1078.700px;top:286.3px"><span class="cp">    url</span><span class="cf">,</span></span>
<span class="a ln" style="left:1022px;top:333.8px">3</span>
<span class="a code" style="left:1078.700px;top:334.3px"><span class="cp">    </span><span class="cf">count</span><span class="cb">()</span><span class="cp"> </span><span class="ck">AS</span><span class="cp"> cnt</span></span>
<span class="a ln" style="left:1022px;top:381.8px">4</span>
<span class="a code" style="left:1078.700px;top:382.3px"><span class="ck">FROM</span><span class="cp"> hits_clickhouse</span></span>
<span class="a ln" style="left:1022px;top:429.8px">5</span>
<span class="a code" style="left:1078.700px;top:430.3px"><span class="ck">WHERE</span><span class="cp"> counterid = </span><span class="cn">38</span></span>
<span class="a ln" style="left:1022px;top:477.8px">6</span>
<span class="a code" style="left:1078.700px;top:478.3px"><span class="ck">GROUP BY</span><span class="cp"> url</span></span>
<span class="a ln" style="left:1022px;top:525.8px">7</span>
<span class="a code" style="left:1078.700px;top:526.3px"><span class="ck">ORDER BY</span><span class="cp"> cnt </span><span class="ck">DESC</span></span>
<span class="a ln" style="left:1022px;top:573.8px">8</span>
<span class="a code" style="left:1078.700px;top:574.3px"><span class="ck">LIMIT</span><span class="cp"> </span><span class="cn">5</span></span>
<div class="a" style="left:1079px;top:284.6px;width:2px;height:95px;background:#d3d3d3;"></div>
<div class="a" style="left:998px;top:1076px;width:2838px;height:2px;background:#e1e2e6;"></div>
<div class="a" style="left:1018px;top:1092px;width:414px;height:64px;background:#fcfcfe;border:2px solid #e1e2e6;border-radius:8px;box-sizing:border-box;"></div>
<svg class="a" style="left:1046.2px;top:1110.2px;color:#161517;" width="27.2" height="27.2" viewBox="0 0 24 24" fill="none" stroke="currentColor" stroke-width="1.5" stroke-linecap="round" stroke-linejoin="round"><circle cx="11" cy="11" r="7.300"/><path d="M16.300 16.300l4.500 4.500"/></svg>
<span class="a t" id="t40" style="top:1103.2px;line-height:41px;font-size:29.11px;color:#9195a3;left:1092.7px;letter-spacing:-0.002px;">Search results...</span>
<div class="a" style="left:1453px;top:1075.8px;width:704.5px;height:95px;border:4px solid #e7381c;box-sizing:border-box;"></div>
<span class="a t" id="t41" style="top:1103.2px;line-height:41px;font-size:29.49px;color:#5c6270;left:1473px;letter-spacing:0.002px;">Elapsed: 0.448s</span>
<span class="a t" id="t42" style="top:1103.2px;line-height:41px;font-size:29.45px;color:#5c6270;left:1726px;letter-spacing:0.008px;">Read: 524,288 rows (46.32 MB)</span>
<div class="a" style="left:3488px;top:1092px;width:264px;height:64px;background:#fff;border:2px solid #e1e2e6;border-radius:8px;box-sizing:border-box;"></div>
<div class="a" style="left:3496px;top:1100px;width:120px;height:48px;background:#eeeff3;border-radius:5px;"></div>
<span class="a t" id="t43" style="top:1103.5px;line-height:41px;font-size:29.28px;color:#161517;left:3521px;letter-spacing:0.006px;">Table</span>
<span class="a t" id="t44" style="top:1103.5px;line-height:41px;font-size:29.85px;color:#3b3e46;left:3646px;letter-spacing:0.003px;">Chart</span>
<div class="a" style="left:3774.0px;top:1121.800px;width:5px;height:5px;border-radius:50%;background:#5c6270"></div>
<div class="a" style="left:3781.6px;top:1121.800px;width:5px;height:5px;border-radius:50%;background:#5c6270"></div>
<div class="a" style="left:3789.2px;top:1121.800px;width:5px;height:5px;border-radius:50%;background:#5c6270"></div>
<div class="a" style="left:998px;top:1176px;width:2805px;height:66px;background:#f6f7fa;"></div>
<div class="a" style="left:998px;top:1244px;width:55px;height:328px;background:#f6f7fa;"></div>
<div class="a" style="left:998px;top:1244px;width:2805px;height:64px;background:#f9fafd;"></div>
<div class="a" style="left:998px;top:1244px;width:55px;height:64px;background:#e9effc;"></div>
<div class="a" style="left:998px;top:1242px;width:2806px;height:2px;background:#e1e2e6;"></div>
<div class="a" style="left:998px;top:1308px;width:2806px;height:2px;background:#e1e2e6;"></div>
<div class="a" style="left:998px;top:1374px;width:2806px;height:2px;background:#e1e2e6;"></div>
<div class="a" style="left:998px;top:1440px;width:2806px;height:2px;background:#e1e2e6;"></div>
<div class="a" style="left:998px;top:1506px;width:2806px;height:2px;background:#e1e2e6;"></div>
<div class="a" style="left:998px;top:1570px;width:2806px;height:2px;background:#e1e2e6;"></div>
<div class="a" style="left:1052px;top:1176px;width:2px;height:396px;background:#e1e2e6;"></div>
<div class="a" style="left:2428px;top:1176px;width:2px;height:396px;background:#e1e2e6;"></div>
<div class="a" style="left:3802px;top:1176px;width:2px;height:396px;background:#e1e2e6;"></div>
<div class="a" style="left:998px;top:1172px;width:2838px;height:4px;background:#3d6e2b;"></div>
<span class="a cell" style="left:1021.500px;top:1193.5px;color:#5c6270">#</span>
<span class="a cell" style="left:1070px;top:1193.5px;color:#5c6270">url</span>
<span class="a cell" style="left:2446.400px;top:1193.5px;color:#5c6270">cnt</span>
<span class="a t" id="t45" style="top:1263.3px;line-height:32px;font-size:23px;color:#161517;left:1028.5px;transform:translateX(-50%);">1</span>
<span class="a cell" style="left:1070px;top:1258.6px">https://produkty%2Fproduct</span>
<span class="a cell" style="left:2446.400px;top:1258.6px">11464</span>
<span class="a t" id="t46" style="top:1329.3px;line-height:32px;font-size:23px;color:#5c6270;left:1028.5px;transform:translateX(-50%);">2</span>
<span class="a cell" style="left:1070px;top:1324.6px">https://produkty%2F</span>
<span class="a cell" style="left:2446.400px;top:1324.6px">6649</span>
<span class="a t" id="t47" style="top:1395.3px;line-height:32px;font-size:23px;color:#5c6270;left:1028.5px;transform:translateX(-50%);">3</span>
<span class="a cell" style="left:1070px;top:1390.6px">https://produkty/kurortmag</span>
<span class="a cell" style="left:2446.400px;top:1390.6px">5764</span>
<span class="a t" id="t48" style="top:1461.3px;line-height:32px;font-size:23px;color:#5c6270;left:1028.5px;transform:translateX(-50%);">4</span>
<span class="a cell" style="left:1070px;top:1456.6px">https://produkty%2Fpulove.ru/album/login</span>
<span class="a cell" style="left:2446.400px;top:1456.6px">5495</span>
<span class="a t" id="t49" style="top:1527.3px;line-height:32px;font-size:23px;color:#5c6270;left:1028.5px;transform:translateX(-50%);">5</span>
<span class="a cell" style="left:1070px;top:1522.6px">https://produkty%2Fpulove.ru/kiroverlanet.ru/otdam-soul</span>
<span class="a cell" style="left:2446.400px;top:1522.6px">5357</span>
<div class="a" style="left:1052px;top:1242px;width:1378px;height:68px;border:4px solid #3b6edc;box-sizing:border-box;"></div>
</body></html>
